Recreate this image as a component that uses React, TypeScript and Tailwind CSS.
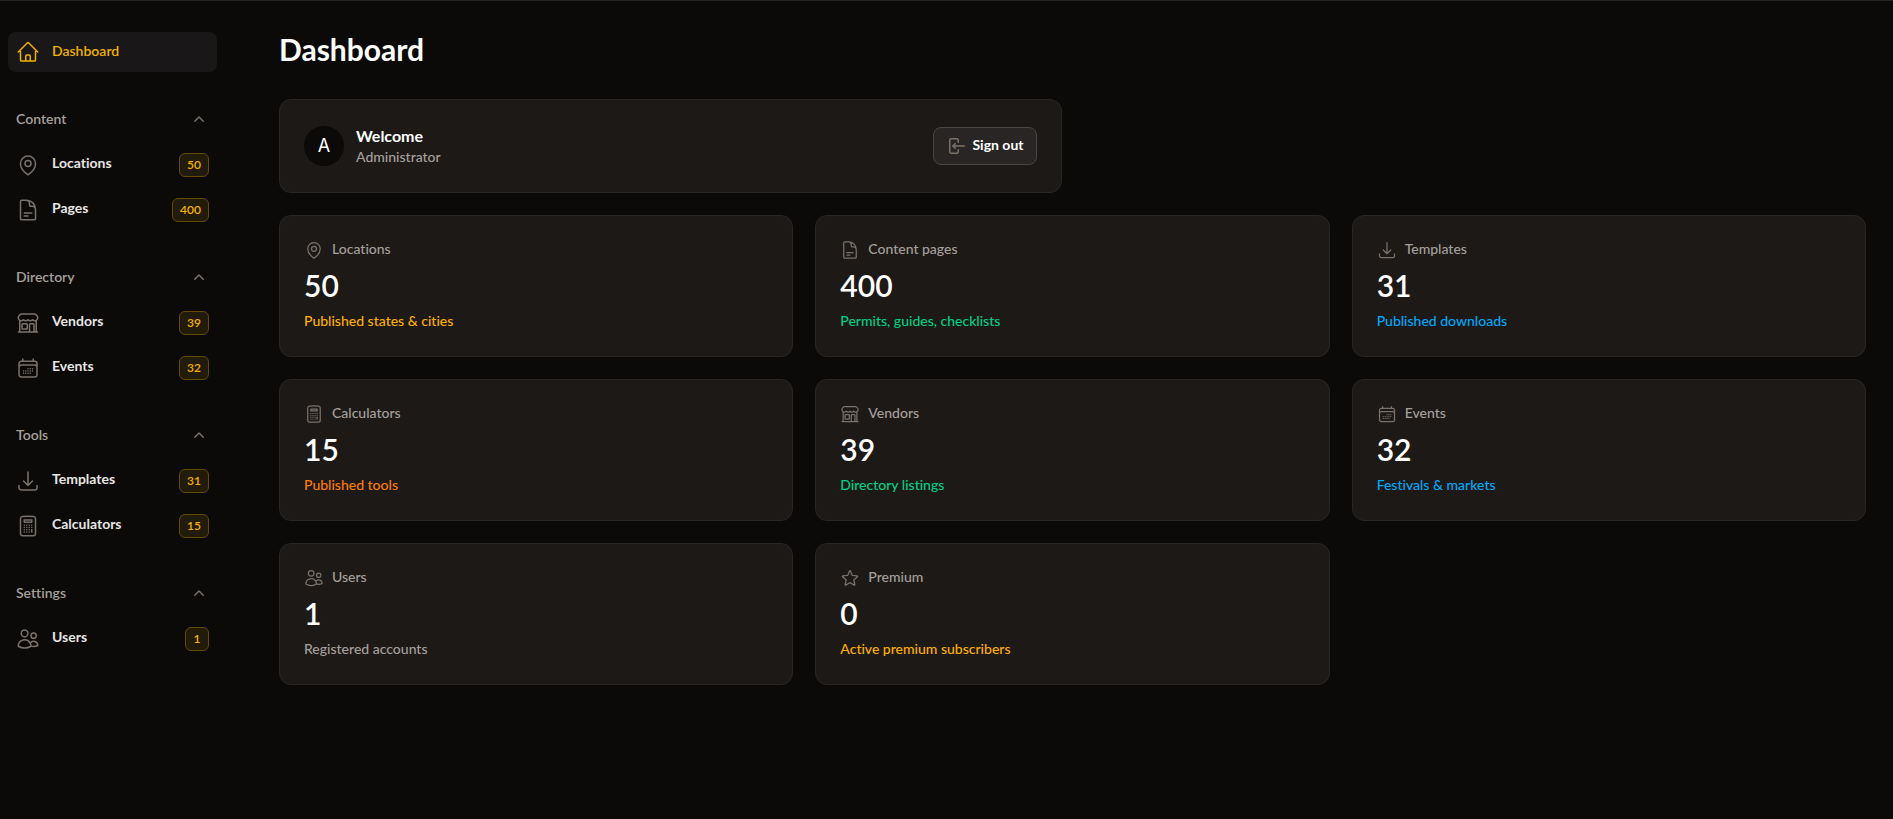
import type { ComponentType } from "react";
import {
  HiOutlineHome,
  HiOutlineMapPin,
  HiOutlineDocumentText,
  HiOutlineBuildingStorefront,
  HiOutlineCalendarDays,
  HiOutlineArrowDownTray,
  HiOutlineCalculator,
  HiOutlineUsers,
  HiOutlineStar,
} from "react-icons/hi2";

type Icon = ComponentType<{ className?: string }>;

type NavItem = { label: string; count: number; icon: Icon };
type NavGroup = { label: string; items: NavItem[] };
type Stat = { label: string; value: number; note: string; tone: string; icon: Icon };

const groups: NavGroup[] = [
  {
    label: "Content",
    items: [
      { label: "Locations", count: 50, icon: HiOutlineMapPin },
      { label: "Pages", count: 400, icon: HiOutlineDocumentText },
    ],
  },
  {
    label: "Directory",
    items: [
      { label: "Vendors", count: 39, icon: HiOutlineBuildingStorefront },
      { label: "Events", count: 32, icon: HiOutlineCalendarDays },
    ],
  },
  {
    label: "Tools",
    items: [
      { label: "Templates", count: 31, icon: HiOutlineArrowDownTray },
      { label: "Calculators", count: 15, icon: HiOutlineCalculator },
    ],
  },
  {
    label: "Settings",
    items: [{ label: "Users", count: 1, icon: HiOutlineUsers }],
  },
];

const stats: Stat[] = [
  { label: "Locations", value: 50, note: "Published states & cities", tone: "text-[#ffb000]", icon: HiOutlineMapPin },
  { label: "Content pages", value: 400, note: "Permits, guides, checklists", tone: "text-[#00d084]", icon: HiOutlineDocumentText },
  { label: "Templates", value: 31, note: "Published downloads", tone: "text-[#00a9fa]", icon: HiOutlineArrowDownTray },
  { label: "Calculators", value: 15, note: "Published tools", tone: "text-[#ff7d00]", icon: HiOutlineCalculator },
  { label: "Vendors", value: 39, note: "Directory listings", tone: "text-[#00d084]", icon: HiOutlineBuildingStorefront },
  { label: "Events", value: 32, note: "Festivals & markets", tone: "text-[#00a9fa]", icon: HiOutlineCalendarDays },
  { label: "Users", value: 1, note: "Registered accounts", tone: "text-[#a6a09b]", icon: HiOutlineUsers },
  { label: "Premium", value: 0, note: "Active premium subscribers", tone: "text-[#ffb000]", icon: HiOutlineStar },
];

function ChevronUp() {
  return (
    <svg viewBox="0 0 20 20" fill="currentColor" className="size-5 text-[#79716b]" aria-hidden="true">
      <path
        fillRule="evenodd"
        d="M9.47 6.47a.75.75 0 0 1 1.06 0l4.25 4.25a.75.75 0 1 1-1.06 1.06L10 8.06l-3.72 3.72a.75.75 0 0 1-1.06-1.06l4.25-4.25Z"
        clipRule="evenodd"
      />
    </svg>
  );
}

function SignOutIcon() {
  return (
    <svg viewBox="0 0 20 20" fill="currentColor" className="size-5 text-[#79716b]" aria-hidden="true">
      <path
        fillRule="evenodd"
        d="M3 4.25A2.25 2.25 0 0 1 5.25 2h5.5A2.25 2.25 0 0 1 13 4.25v2a.75.75 0 0 1-1.5 0v-2a.75.75 0 0 0-.75-.75h-5.5a.75.75 0 0 0-.75.75v11.5c0 .414.336.75.75.75h5.5a.75.75 0 0 0 .75-.75v-2a.75.75 0 0 1 1.5 0v2A2.25 2.25 0 0 1 10.75 18h-5.5A2.25 2.25 0 0 1 3 15.75V4.25Z"
        clipRule="evenodd"
      />
      <path
        fillRule="evenodd"
        d="M19 10a.75.75 0 0 0-.75-.75H8.704l1.048-.943a.75.75 0 1 0-1.004-1.114l-2.5 2.25a.75.75 0 0 0 0 1.114l2.5 2.25a.75.75 0 1 0 1.004-1.114l-1.048-.943h9.546A.75.75 0 0 0 19 10Z"
        clipRule="evenodd"
      />
    </svg>
  );
}

function Sidebar() {
  return (
    <nav aria-label="Main" className="flex w-[225px] shrink-0 flex-col gap-7 px-2 pt-[31px] pb-8">
      <a
        href="#dashboard"
        aria-current="page"
        className="flex h-10 items-center gap-3 rounded-lg bg-[#191718] px-2 text-sm font-semibold text-[#f0b100]"
      >
        <HiOutlineHome className="size-6" />
        <span className="pb-0.5">Dashboard</span>
      </a>
      {groups.map((group) => (
        <section key={group.label} className="flex flex-col gap-1">
          <button type="button" aria-expanded="true" className="flex h-10 items-center justify-between px-2">
            <span className="pb-0.5 text-sm font-semibold text-[#a6a09b]">{group.label}</span>
            <ChevronUp />
          </button>
          <ul className="flex flex-col gap-1">
            {group.items.map(({ label, count, icon: ItemIcon }) => (
              <li key={label}>
                <a href={"#" + label.toLowerCase()} className="flex h-[41px] items-center gap-3 px-2">
                  <ItemIcon className="size-6 text-[#79716b]" />
                  <span className="flex-1 pb-1 text-sm font-bold text-[#e7e5e4]">{label}</span>
                  <span className="flex h-6 min-w-6 items-center justify-center rounded-md border border-[#644a05] bg-[#231b09] px-[7px] text-xs font-semibold text-[#f0b100]">
                    {count}
                  </span>
                </a>
              </li>
            ))}
          </ul>
        </section>
      ))}
    </nav>
  );
}

function WelcomeCard() {
  return (
    <section className="flex items-center gap-3 rounded-xl border border-[#292725] bg-[#1c1917] p-6 lg:w-[calc(50%-11px)]">
      <div className="flex size-10 items-center justify-center rounded-full bg-[#0c0a09] font-[Inter,sans-serif] text-lg text-white" aria-hidden="true">
        A
      </div>
      <div className="flex-1 pb-px">
        <h2 className="text-base leading-[23px] font-bold text-white">Welcome</h2>
        <p className="text-sm leading-5 font-medium text-[#a6a09b]">Administrator</p>
      </div>
      <button
        type="button"
        className="flex h-[38px] items-center gap-1.5 rounded-lg border border-[#494542] bg-[#292524] px-3 text-sm font-bold text-white"
      >
        <SignOutIcon />
        <span className="pb-0.5">Sign out</span>
      </button>
    </section>
  );
}

function StatCard({ label, value, note, tone, icon: StatIcon }: Stat) {
  return (
    <article className="flex flex-col rounded-xl border border-[#292725] bg-[#1c1917] px-6 pt-6 pb-[25px]">
      <div className="flex h-5 items-center gap-2">
        <StatIcon className="size-5 text-[#79716b]" />
        <h3 className="pb-0.5 text-sm leading-5 font-medium text-[#a6a09b]">{label}</h3>
      </div>
      <p className="mt-[7px] text-3xl leading-9 font-semibold text-white">{value}</p>
      <p className={"mt-2 text-sm leading-5 font-medium " + tone}>{note}</p>
    </article>
  );
}

export default function App() {
  return (
    <div className="flex min-h-screen border-t border-[#242321] bg-[#0c0a09] font-[Lato,sans-serif] [font-variant-ligatures:none]">
      <Sidebar />
      <main className="min-w-0 flex-1 pt-[30px] pr-[27px] pb-8 pl-[54px]">
        <h1 className="text-3xl leading-9 font-bold text-white">Dashboard</h1>
        <div className="mt-8 flex flex-col gap-[22px]">
          <WelcomeCard />
          <div className="grid grid-cols-1 gap-[22px] md:grid-cols-3">
            {stats.map((stat) => (
              <StatCard key={stat.label} {...stat} />
            ))}
          </div>
        </div>
      </main>
    </div>
  );
}
